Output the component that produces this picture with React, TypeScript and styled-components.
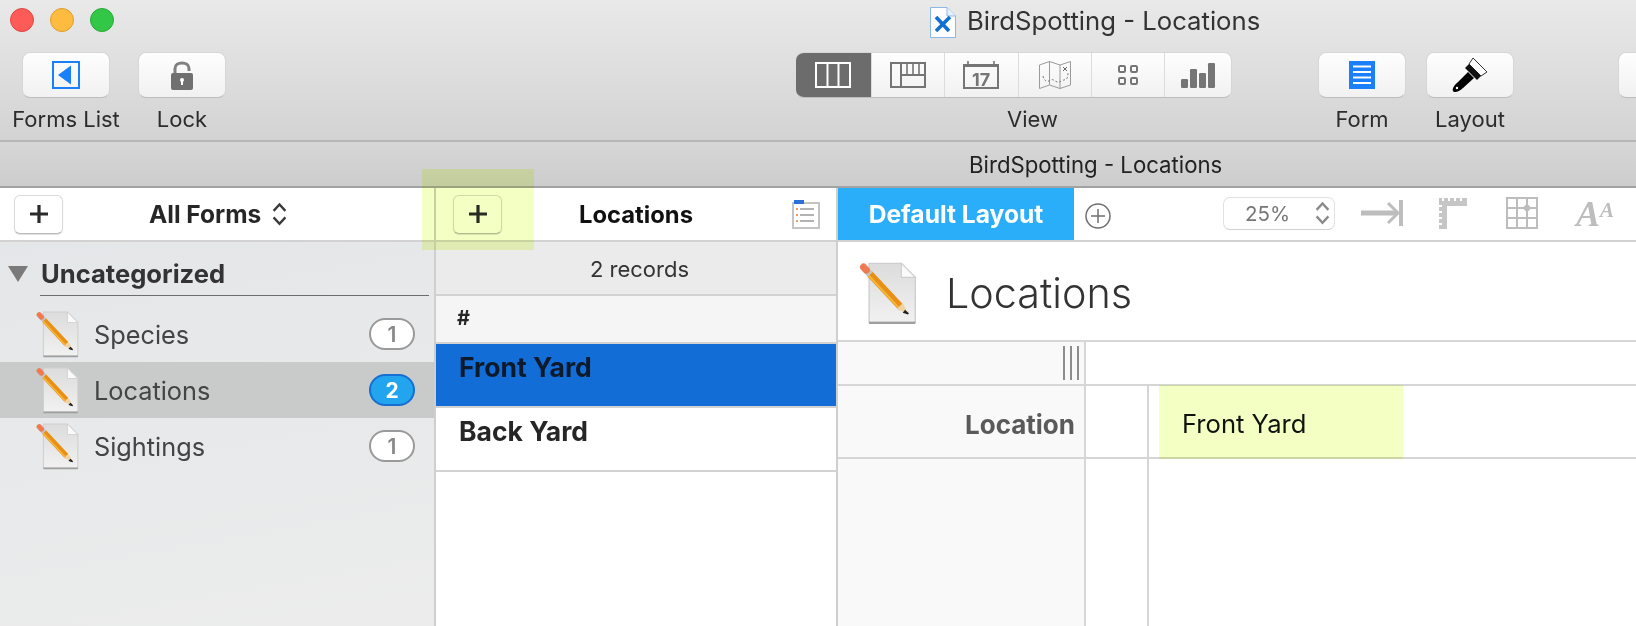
import React from "react";
import styled, { createGlobalStyle } from "styled-components";

const GlobalStyle = createGlobalStyle`
  html, body {
    margin: 0;
    padding: 0;
    width: 1636px;
    height: 626px;
    overflow: hidden;
    background: #fff;
    font-family: Inter, "Liberation Sans", sans-serif;
    color: #262626;
  }
  * { box-sizing: border-box; }
`;

const Page = styled.div`
  position: relative;
  width: 1636px;
  height: 626px;
  overflow: hidden;
  display: flex;
  flex-direction: column;
`;

/////////////////////////////////// Toolbar
const Toolbar = styled.header`
  height: 142px;
  flex: none;
  background: linear-gradient(#e9e9e9, #d3d3d3);
  border-bottom: 2px solid #b6b6b6;
`;

const TitleRow = styled.div`
  height: 52px;
  display: flex;
  align-items: flex-start;
  padding: 8px 0 0 10px;
`;

const Lights = styled.div`
  display: flex;
  gap: 16px;
`;

const Light = styled.span<{ $fill: string; $edge: string }>`
  width: 24px;
  height: 24px;
  border-radius: 50%;
  background: ${p => p.$fill};
  border: 1px solid ${p => p.$edge};
`;

const WindowTitle = styled.div`
  margin: -4px 0 0 816px;
  display: flex;
  align-items: center;
  gap: 11px;
  font-size: 25.7px;
  line-height: 32px;
  color: #333;
`;

const ToolRow = styled.div`
  display: flex;
  align-items: flex-start;
  padding-left: 22px;
`;

const ToolItem = styled.div<{ $gap?: number; $w?: number }>`
  width: ${p => p.$w ?? 88}px;
  flex: none;
  display: flex;
  flex-direction: column;
  align-items: center;
  margin-left: ${p => p.$gap ?? 0}px;
`;

const ToolButton = styled.div`
  width: 88px;
  height: 46px;
  flex: none;
  border-radius: 8px;
  background: linear-gradient(#fefefe, #f1f1f1);
  border: 1px solid #d6d6d6;
  border-bottom-color: #bdbdbd;
  display: flex;
  align-items: center;
  justify-content: center;
`;

const ToolLabel = styled.div<{ $shift?: number }>`
  margin: 8px 0 0 ${p => p.$shift ?? 0}px;
  font-size: 22px;
  line-height: 26px;
  white-space: nowrap;
  color: #2c2c2c;
`;

const Segmented = styled.div`
  display: flex;
  height: 46px;
  border-radius: 8px;
  overflow: hidden;
  background: linear-gradient(#fefefe, #f1f1f1);
  border: 1px solid #d6d6d6;
  border-left: 0;
  border-bottom-color: #bdbdbd;
`;

const Segment = styled.div<{ $w: number; $active?: boolean }>`
  width: ${p => p.$w}px;
  display: flex;
  align-items: center;
  justify-content: center;
  background: ${p => (p.$active ? "#6c6c6c" : "transparent")};
  border-right: 1px solid #dcdcdc;
  &:last-child { border-right: 0; }
`;

const DocBar = styled.div`
  height: 46px;
  flex: none;
  background: linear-gradient(#d6d6d6, #cdcdcd);
  border-bottom: 2px solid #a2a2a2;
  padding-left: 969px;
  font-size: 22.2px;
  line-height: 45px;
  color: #222;
`;

/////////////////////////////////// Panels
const Main = styled.main`
  flex: 1;
  display: flex;
  min-height: 0;
`;

const Sidebar = styled.aside`
  width: 436px;
  flex: none;
  background: linear-gradient(170deg, #e3e6e8, #ececec);
  border-right: 2px solid #cfcfcf;
`;

const PaneHead = styled.div`
  height: 54px;
  display: flex;
  align-items: center;
  background: #fff;
  border-bottom: 2px solid #d2d2d2;
`;

const AddButton = styled.div<{ $left: number }>`
  width: 49px;
  height: 39px;
  margin-left: ${p => p.$left}px;
  flex: none;
  border-radius: 6px;
  background: #fff;
  border: 1px solid #dadada;
  border-bottom-color: #b9b9b9;
  box-shadow: 0 1px 1px rgba(0, 0, 0, 0.12);
  display: flex;
  align-items: center;
  justify-content: center;
`;

const FormsPicker = styled.div`
  margin-left: 86px;
  display: flex;
  align-items: center;
  gap: 11px;
  font-size: 24.5px;
  font-weight: 700;
`;

const SectionHead = styled.div`
  margin-top: 11px;
  display: flex;
  align-items: center;
  height: 41px;
  padding-left: 8px;
  gap: 13px;
  font-size: 25.6px;
  font-weight: 700;
  color: #333;
`;

const SectionRule = styled.div`
  margin: 1px 5px 10px 40px;
  height: 1px;
  background: #6d6d6d;
`;

const FormRow = styled.div<{ $selected?: boolean }>`
  height: 56px;
  display: flex;
  align-items: center;
  padding: 0 19px 0 36px;
  background: ${p => (p.$selected ? "#c9caca" : "transparent")};
  font-size: 25.3px;
  color: #444;
`;

const RowName = styled.span`
  flex: 1;
  margin: 1px 0 0 15px;
`;

const Badge = styled.span<{ $on?: boolean }>`
  width: 46px;
  height: 32px;
  border-radius: 16px;
  border: 2px solid ${p => (p.$on ? "#156fd2" : "#9a9a9a")};
  background: ${p => (p.$on ? "#22a4ee" : "#fff")};
  color: ${p => (p.$on ? "#fff" : "#888")};
  font-size: 21px;
  font-weight: ${p => (p.$on ? 700 : 600)};
  display: flex;
  align-items: center;
  justify-content: center;
`;

const ListPane = styled.section`
  width: 402px;
  flex: none;
  background: #fff;
  border-right: 2px solid #cfcfcf;
`;

const ListTitle = styled.div`
  margin-left: 77px;
  flex: 1;
  font-size: 23.8px;
  font-weight: 700;
  color: #111;
`;

const RecordCount = styled.div`
  height: 54px;
  display: flex;
  align-items: center;
  justify-content: center;
  background: #ebebeb;
  border-bottom: 2px solid #d2d2d2;
  font-size: 22px;
  padding: 1px 0 0 7px;
  color: #333;
`;

const ColumnHead = styled.div`
  height: 48px;
  padding-left: 21px;
  background: #f5f5f5;
  border-bottom: 2px solid #d2d2d2;
  font-size: 20px;
  font-weight: 700;
  line-height: 44px;
`;

const Record = styled.div<{ $selected?: boolean }>`
  height: 64px;
  padding: 5px 0 0 23px;
  background: ${p => (p.$selected ? "#136dd6" : "#fff")};
  border-bottom: 2px solid #d2d2d2;
  font-size: 26.5px;
  line-height: 36px;
  font-weight: 700;
  color: ${p => (p.$selected ? "#0c1a2c" : "#262626")};
`;

const Detail = styled.section`
  flex: 1;
  background: #fff;
  display: flex;
  flex-direction: column;
`;

const DetailHead = styled(PaneHead)`
  align-items: stretch;
`;

const LayoutTab = styled.div`
  width: 236px;
  background: #2aaef9;
  color: #fff;
  font-size: 24.6px;
  font-weight: 700;
  display: flex;
  align-items: center;
  justify-content: center;
`;

const HeadTools = styled.div`
  flex: 1;
  display: flex;
  align-items: center;
`;

const ZoomStepper = styled.div`
  width: 112px;
  height: 33px;
  margin: -2px 26px 0 112px;
  border: 1px solid #e2e2e2;
  border-bottom-color: #d2d2d2;
  border-radius: 7px;
  display: flex;
  align-items: center;
  justify-content: space-between;
  padding: 0 4px 0 21px;
  font-size: 20.5px;
  color: #777;
`;

const FontGlyph = styled.span`
  margin-left: 38px;
  font-family: "Liberation Serif", serif;
  font-style: italic;
  font-weight: 700;
  font-size: 36px;
  line-height: 1;
  color: #bdbdbd;
  white-space: nowrap;
  & small { font-size: 21px; vertical-align: 9px; }
`;

const DetailTitle = styled.div`
  height: 100px;
  flex: none;
  display: flex;
  align-items: center;
  padding: 4px 0 0 21px;
  gap: 29px;
  font-size: 41.3px;
  font-weight: 300;
  color: #333;
  border-bottom: 2px solid #d6d6d6;
`;

const FormGrid = styled.div`
  flex: 1;
  display: grid;
  grid-template-columns: 248px 63px 1fr;
  grid-template-rows: 44px 73px 1fr;
`;

const LabelCell = styled.div`
  background: #f9f9f9;
  border-right: 2px solid #d6d6d6;
  border-bottom: 2px solid #d6d6d6;
  &:nth-last-child(-n + 3) { border-bottom: 0; }
`;

const GripCell = styled(LabelCell)`
  display: flex;
  justify-content: flex-end;
  align-items: center;
  gap: 5px;
  padding: 0 5px 0 0;
  border-bottom-width: 2px;
`;

const Grip = styled.span`
  width: 2px;
  height: 34px;
  background: #8d8d8d;
`;

const HeaderFill = styled.div`
  grid-column: 2 / 4;
  border-bottom: 2px solid #d6d6d6;
`;

const FieldLabel = styled(LabelCell)`
  display: flex;
  align-items: center;
  justify-content: flex-end;
  padding: 6px 9px 0 0;
  font-size: 26px;
  font-weight: 700;
  color: #5a5a5a;
`;

const Gutter = styled.div`
  border-right: 2px solid #d6d6d6;
  border-bottom: 2px solid #d6d6d6;
  &:nth-last-child(-n + 2) { border-bottom: 0; }
`;

const ValueCell = styled.div`
  border-bottom: 2px solid #d6d6d6;
  &:last-child { border-bottom: 0; }
`;

const ValueText = styled.div`
  height: 71px;
  padding: 4px 0 0 33px;
  display: flex;
  align-items: center;
  font-size: 25.6px;
  color: #111;
`;

/////////////////////////////////// Things laid over the content
const Highlight = styled.div<{ $x: number; $y: number; $w: number; $h: number }>`
  position: absolute;
  left: ${p => p.$x}px;
  top: ${p => p.$y}px;
  width: ${p => p.$w}px;
  height: ${p => p.$h}px;
  background: #f4ffc4;
  mix-blend-mode: multiply;
`;

/////////////////////////////////// Icons
function PencilDoc({ width, height }: { width: number; height: number }) {
  return (
    <svg width={width} height={height} viewBox="0 0 41 45" style={{ flex: "none" }}>
      <defs>
        <linearGradient id="docFill" x1="0" y1="0" x2="0" y2="1">
          <stop offset="0" stopColor="#dcdcdc" />
          <stop offset="1" stopColor="#f1f1f1" />
        </linearGradient>
      </defs>
      <path d="M7 1H30L40 11V43H7Z" fill="url(#docFill)" stroke="#cfcfcf" strokeWidth="1" />
      <path d="M7 43.5H40" stroke="#9f9f9f" strokeWidth="1.6" />
      <path d="M30 1L40 11H30Z" fill="#fafafa" stroke="#cfcfcf" strokeWidth="0.8" />
      <path d="M7.5 8.5L29 31.5" stroke="#e88f14" strokeWidth="5" />
      <path d="M6.6 9.6L27.8 32.2" stroke="#f6b73c" strokeWidth="1.4" />
      <path d="M26.8 33.8L31.2 29.6L35 37Z" fill="#eed3a3" />
      <path d="M32.8 35L35 37L32 36Z" fill="#222" stroke="#222" strokeWidth="1.2" />
      <path d="M4.8 5.6L7.8 8.8" stroke="#c4c4c4" strokeWidth="5" />
      <path d="M3 3.6L5 5.8" stroke="#ee7b4f" strokeWidth="5" strokeLinecap="round" />
    </svg>
  );
}

function Chevrons({ color, size }: { color: string; size: number }) {
  return (
    <svg width={size} height={size * 1.75} viewBox="0 0 14 24" fill="none" stroke={color} strokeWidth="2.2">
      <path d="M1.5 9L7 3L12.5 9" />
      <path d="M1.5 15L7 21L12.5 15" />
    </svg>
  );
}

function Plus() {
  return (
    <svg width="20" height="20" viewBox="0 0 20 20">
      <path d="M10 1V19M1 10H19" stroke="#2a2a2a" strokeWidth="3.2" />
    </svg>
  );
}

function PageX() {
  return (
    <svg width="26" height="31" viewBox="0 0 26 31" style={{ marginTop: 3 }}>
      <path d="M.5 .5H17L25.5 9V30.5H.5Z" fill="#fdfdfd" stroke="#8db7e6" />
      <path d="M17 .5V9H25.5" fill="#e8f0fa" stroke="#8db7e6" />
      <path d="M6 10L19 24M20 10L6 24" stroke="#1270cf" strokeWidth="3.6" />
    </svg>
  );
}

function BackIcon() {
  return (
    <svg width="28" height="28" viewBox="0 0 28 28">
      <rect x="1" y="1" width="26" height="26" fill="none" stroke="#1a7ffb" strokeWidth="2" />
      <path d="M19 4.5V23.5L6 14Z" fill="#1a7ffb" />
    </svg>
  );
}

function LockIcon() {
  return (
    <svg width="24" height="31" viewBox="0 0 24 31">
      <path d="M5 14V8.5C5 1 19 1 19 8.5V11" fill="none" stroke="#808080" strokeWidth="3" />
      <rect x="1" y="13" width="22" height="17" rx="2" fill="#707070" />
      <circle cx="12" cy="20" r="2" fill="#fff" />
      <rect x="11" y="20" width="2" height="5" fill="#fff" />
    </svg>
  );
}

function FormIcon() {
  return (
    <svg width="26" height="28" viewBox="0 0 26 28">
      <rect width="26" height="28" fill="#1a7ffb" />
      <path d="M4 5.5H22M4 11H22M4 16.5H22M4 22H22" stroke="#fff" strokeWidth="1.8" />
    </svg>
  );
}

function BrushIcon() {
  return (
    <svg width="36" height="36" viewBox="0 0 36 36">
      <path d="M17 7L21 1L35 15L29 19Z" fill="#fff" stroke="#333" strokeWidth="1" />
      <path d="M13 11L17 7L29 19L25 23Z" fill="#111" />
      <path d="M16 15L22 21L11 31C7 35 2 36 1 34C0 32 2 28 6 25Z" fill="#000" />
      <circle cx="5" cy="31" r="1.2" fill="#fff" />
    </svg>
  );
}

function ColumnsIcon() {
  return (
    <svg width="36" height="26" viewBox="0 0 36 26" fill="none" stroke="#fff" strokeWidth="2">
      <rect x="1" y="1" width="34" height="24" />
      <path d="M12.5 1V25M23.5 1V25" />
    </svg>
  );
}

function GridIcon() {
  return (
    <svg width="36" height="26" viewBox="0 0 36 26" fill="none" stroke="#757575" strokeWidth="2">
      <rect x="1" y="1" width="34" height="24" />
      <path d="M11 1V25M11 13H35" />
      <path d="M17 1V12M23 1V12M29 1V12" strokeWidth="1.6" />
    </svg>
  );
}

function CalendarIcon() {
  return (
    <svg width="36" height="28" viewBox="0 0 36 28">
      <rect x="1" y="4" width="34" height="23" fill="none" stroke="#757575" strokeWidth="2" />
      <rect x="1" y="3" width="34" height="3" fill="#757575" />
      <path d="M5 0V4M31 0V4" stroke="#757575" strokeWidth="1.6" />
      <text x="18" y="24.5" textAnchor="middle" fontFamily="Inter, sans-serif" fontWeight="700" fontSize="18" fill="#757575">17</text>
    </svg>
  );
}

function MapIcon() {
  return (
    <svg width="32" height="28" viewBox="0 0 32 28" fill="none" stroke="#9a9a9a" strokeWidth="1">
      <path d="M.5 4L10.5 .5L21 4L31.5 .5V24L21 27.5L10.5 24L.5 27.5Z" />
      <path d="M10.5 .5V24M21 4V27.5" />
      <path d="M4 15C5 21 9 21 12 19C15 17 18 24 22 20C26 18 29 20 29 12" strokeDasharray="2 2" stroke="#777" />
      <path d="M24 6L28 10M28 6L24 10" stroke="#666" />
    </svg>
  );
}

function TilesIcon() {
  return (
    <svg width="20" height="20" viewBox="0 0 20 20" fill="none" stroke="#757575" strokeWidth="2">
      <rect x="1" y="1" width="6" height="6" rx="1.2" />
      <rect x="13" y="1" width="6" height="6" rx="1.2" />
      <rect x="1" y="13" width="6" height="6" rx="1.2" />
      <rect x="13" y="13" width="6" height="6" rx="1.2" />
    </svg>
  );
}

function BarsIcon() {
  return (
    <svg width="34" height="25" viewBox="0 0 34 25" fill="#757575">
      <rect x="0" y="16" width="7" height="9" rx="1.2" />
      <rect x="9" y="6" width="7" height="19" rx="1.2" />
      <rect x="18" y="10" width="7" height="15" rx="1.2" />
      <rect x="27" y="0" width="7" height="25" rx="1.2" />
    </svg>
  );
}

function ListIcon() {
  return (
    <svg width="28" height="29" viewBox="0 0 28 29" style={{ marginRight: 16, marginTop: 1, flex: "none" }}>
      <rect x="1" y="3" width="26" height="25" fill="#fff" stroke="#c4c4c4" strokeWidth="2" />
      <rect x="2" y="0" width="10" height="4" fill="#2c6fd6" />
      <path d="M8 9H22M8 15H22M8 21H22" stroke="#9a9a9a" strokeWidth="1.4" />
      <path d="M4 9H6M4 15H6M4 21H6" stroke="#ef7d33" strokeWidth="1.6" />
    </svg>
  );
}

function CirclePlus() {
  return (
    <svg width="26" height="26" viewBox="0 0 26 26" fill="none" stroke="#6f6f6f" strokeWidth="1.5" style={{ margin: "3px 0 0 11px" }}>
      <circle cx="13" cy="13" r="12" />
      <path d="M13 6V20M6 13H20" />
    </svg>
  );
}

function TriangleIcon() {
  return (
    <svg width="20" height="16" viewBox="0 0 20 16">
      <path d="M0 0H20L10 16Z" fill="#7a7a7a" />
    </svg>
  );
}

function ArrowBarIcon() {
  return (
    <svg width="42" height="26" viewBox="0 0 42 26" fill="none" stroke="#bdbdbd" style={{ marginTop: -2 }}>
      <path d="M0 13H36" strokeWidth="5" />
      <path d="M27 3L37 13L27 23" strokeWidth="3" />
      <path d="M40 0V26" strokeWidth="4" />
    </svg>
  );
}

function RulerIcon() {
  return (
    <svg width="28" height="31" viewBox="0 0 28 31" fill="#c6c6c6" style={{ marginLeft: 36, marginTop: -2 }}>
      <path d="M0 0H3V3H5V0H9V3H11V0H15V3H17V0H21V3H23V0H28V8H8V31H0V27H3V25H0V21H3V19H0V15H3V13H0V9H3V7H0Z" />
    </svg>
  );
}

function TableIcon() {
  return (
    <svg width="32" height="32" viewBox="0 0 32 32" fill="none" stroke="#bdbdbd" strokeWidth="2" style={{ marginLeft: 39, marginTop: -2 }}>
      <rect x="1" y="1" width="30" height="30" />
      <path d="M11 1V31M21 1V31M1 11H31M1 21H31" />
      <path d="M21 6.5L25.5 11L21 15.5L16.5 11Z" fill="#bdbdbd" stroke="none" />
    </svg>
  );
}

const forms = [
  { name: "Species", count: 1 },
  { name: "Locations", count: 2, selected: true },
  { name: "Sightings", count: 1 },
];

export default function App() {
  return (
    <Page>
      <GlobalStyle />
      <Toolbar>
        <TitleRow>
          <Lights>
            <Light $fill="#fc5b57" $edge="#e2463f" />
            <Light $fill="#fdbb3f" $edge="#e09e2b" />
            <Light $fill="#33c748" $edge="#27aa35" />
          </Lights>
          <WindowTitle>
            <PageX />
            BirdSpotting - Locations
          </WindowTitle>
        </TitleRow>
        <ToolRow>
          <ToolItem>
            <ToolButton><BackIcon /></ToolButton>
            <ToolLabel>Forms List</ToolLabel>
          </ToolItem>
          <ToolItem $gap={28}>
            <ToolButton><LockIcon /></ToolButton>
            <ToolLabel>Lock</ToolLabel>
          </ToolItem>
          <ToolItem $gap={570} $w={435}>
            <Segmented>
              <Segment $w={76} $active><ColumnsIcon /></Segment>
              <Segment $w={73}><GridIcon /></Segment>
              <Segment $w={74}><CalendarIcon /></Segment>
              <Segment $w={73}><MapIcon /></Segment>
              <Segment $w={73}><TilesIcon /></Segment>
              <Segment $w={66}><BarsIcon /></Segment>
            </Segmented>
            <ToolLabel $shift={38}>View</ToolLabel>
          </ToolItem>
          <ToolItem $gap={87}>
            <ToolButton><FormIcon /></ToolButton>
            <ToolLabel>Form</ToolLabel>
          </ToolItem>
          <ToolItem $gap={20}>
            <ToolButton><BrushIcon /></ToolButton>
            <ToolLabel>Layout</ToolLabel>
          </ToolItem>
          <ToolItem $gap={104}>
            <ToolButton />
          </ToolItem>
        </ToolRow>
      </Toolbar>
      <DocBar>BirdSpotting - Locations</DocBar>
      <Main>
        <Sidebar>
          <PaneHead>
            <AddButton $left={14}><Plus /></AddButton>
            <FormsPicker>
              All Forms
              <Chevrons color="#3a3a3a" size={15} />
            </FormsPicker>
          </PaneHead>
          <SectionHead>
            <TriangleIcon />
            Uncategorized
          </SectionHead>
          <SectionRule />
          {forms.map(f => (
            <FormRow key={f.name} $selected={f.selected}>
              <PencilDoc width={43} height={47} />
              <RowName>{f.name}</RowName>
              <Badge $on={f.selected}>{f.count}</Badge>
            </FormRow>
          ))}
        </Sidebar>
        <ListPane>
          <PaneHead>
            <AddButton $left={17}><Plus /></AddButton>
            <ListTitle>Locations</ListTitle>
            <ListIcon />
          </PaneHead>
          <RecordCount>2 records</RecordCount>
          <ColumnHead>#</ColumnHead>
          <Record $selected>Front Yard</Record>
          <Record>Back Yard</Record>
        </ListPane>
        <Detail>
          <DetailHead>
            <LayoutTab>Default Layout</LayoutTab>
            <HeadTools>
              <CirclePlus />
              <ZoomStepper>
                25%
                <Chevrons color="#8a8a8a" size={15} />
              </ZoomStepper>
              <ArrowBarIcon />
              <RulerIcon />
              <TableIcon />
              <FontGlyph>A<small>A</small></FontGlyph>
            </HeadTools>
          </DetailHead>
          <DetailTitle>
            <PencilDoc width={58} height={63} />
            Locations
          </DetailTitle>
          <FormGrid>
            <GripCell><Grip /><Grip /><Grip /></GripCell>
            <HeaderFill />
            <FieldLabel>Location</FieldLabel>
            <Gutter />
            <ValueCell><ValueText>Front Yard</ValueText></ValueCell>
            <LabelCell />
            <Gutter />
            <ValueCell />
          </FormGrid>
        </Detail>
      </Main>
      <Highlight $x={422} $y={169} $w={112} $h={81} />
      <Highlight $x={1159} $y={385} $w={244} $h={74} />
    </Page>
  );
}
